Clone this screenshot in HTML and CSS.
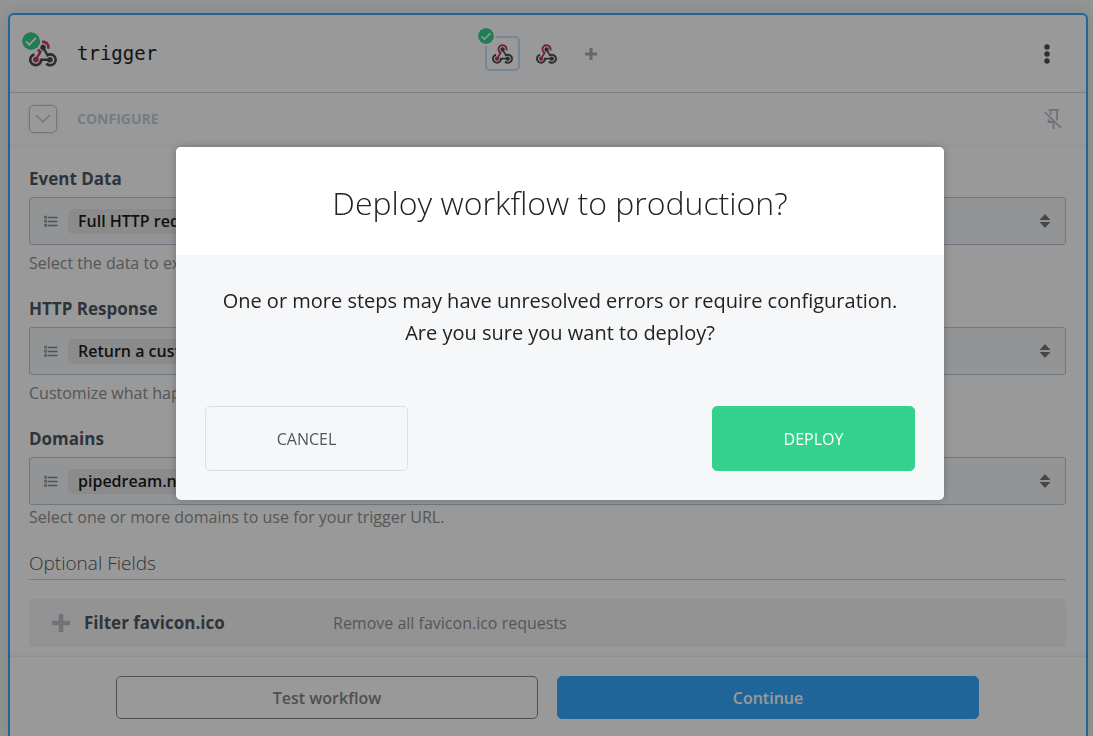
FILE: index.html
```html
<!DOCTYPE html>
<html lang="en">
<head>
<meta charset="utf-8">
<meta name="viewport" content="width=device-width, initial-scale=1">
<title>Deploy workflow</title>
<link rel="stylesheet" href="styles.css">
</head>
<body>
<svg class="sprite" aria-hidden="true">
  <symbol id="webhook" viewBox="0 0 256 239">
    <path fill="#C73A63" d="M119.54 100.503c-10.61 17.836-20.775 35.108-31.152 52.25-2.665 4.401-3.984 7.986-1.855 13.58 5.878 15.454-2.414 30.493-17.998 34.575-14.697 3.851-29.016-5.808-31.932-21.543-2.584-13.927 8.224-27.58 23.58-29.757 1.286-.184 2.6-.205 4.762-.367l23.358-39.168C73.612 95.465 64.868 78.39 66.803 57.23c1.368-14.957 7.25-27.883 18-38.477 20.59-20.288 52.002-23.573 76.246-8.001 23.284 14.958 33.948 44.094 24.858 69.031-6.854-1.858-13.756-3.732-21.343-5.79 2.854-13.865.743-26.315-8.608-36.981-6.178-7.042-14.106-10.733-23.12-12.093-18.072-2.73-35.815 8.88-41.08 26.618-5.976 20.132 3.069 36.575 27.784 48.967z"/>
    <path fill="#4B4B4B" d="M149.841 79.41c7.475 13.187 15.065 26.573 22.587 39.836 38.02-11.763 66.686 9.284 76.97 31.817 12.422 27.219 3.93 59.457-20.465 76.25-25.04 17.238-56.707 14.293-78.892-7.851 5.654-4.733 11.336-9.487 17.407-14.566 21.912 14.192 41.077 13.524 55.305-3.282 12.133-14.337 11.87-35.714-.615-49.75-14.408-16.197-33.707-16.691-57.035-1.143-9.677-17.168-19.522-34.199-28.893-51.491-3.16-5.828-6.648-9.21-13.77-10.443-11.893-2.062-19.571-12.275-20.032-23.717-.453-11.316 6.214-21.545 16.634-25.53 10.322-3.949 22.435-.762 29.378 8.014 5.674 7.17 7.477 15.24 4.491 24.083-.83 2.466-1.905 4.852-3.07 7.774z"/>
    <path fill="#4A4A4A" d="M167.707 187.21h-45.77c-4.387 18.044-13.863 32.612-30.19 41.876-12.693 7.2-26.373 9.641-40.933 7.29-26.808-4.323-48.728-28.456-50.658-55.63-2.184-30.784 18.975-58.147 47.178-64.293 1.947 7.071 3.915 14.21 5.862 21.264-25.876 13.202-34.832 29.836-27.59 50.636 6.375 18.304 24.484 28.337 44.147 24.457 20.08-3.962 30.204-20.65 28.968-47.432 19.036 0 38.088-.197 57.126.097 7.434.117 13.173-.654 18.773-7.208 9.22-10.784 26.191-9.811 36.121.374 10.148 10.409 9.662 27.157-1.077 37.127-10.361 9.62-26.73 9.106-36.424-1.26-1.992-2.136-3.562-4.673-5.533-7.298z"/>
  </symbol>
  <symbol id="check" viewBox="0 0 18 18">
    <circle cx="9" cy="9" r="9" fill="#35d28d"/>
    <path d="M4 9.3l3.3 3.3L14 5.8" fill="none" stroke="#fff" stroke-width="1.8"/>
  </symbol>
  <symbol id="plus" viewBox="0 0 16 16">
    <path d="M6 0h4v6h6v4h-6v6H6v-6H0V6h6z" fill="currentColor"/>
  </symbol>
  <symbol id="list" viewBox="0 0 14 13">
    <path d="M4 2.5h9.5M4 6.5h9.5M4 10.5h9.5" fill="none" stroke="currentColor" stroke-width="1.5"/>
    <path d="M.7 1.2h2v2h-2zM.7 5.2h2v2h-2zM.7 9.4h2v2h-2z" fill="none" stroke="currentColor" stroke-width="1"/>
  </symbol>
  <symbol id="sort" viewBox="0 0 12 14">
    <path d="M6 0l5.5 6H.5zM6 14L.5 8h11z" fill="currentColor"/>
  </symbol>
</svg>

<main class="card">
  <header class="card-header">
    <div class="title">
      <span class="title-icon">
        <svg class="logo-large"><use href="#webhook"/></svg>
        <svg class="badge badge-large"><use href="#check"/></svg>
      </span>
      <h1 class="name">trigger</h1>
    </div>
    <nav class="tabs" aria-label="Triggers">
      <button class="tab tab-active" aria-label="Trigger 1">
        <svg class="logo-small"><use href="#webhook"/></svg>
        <svg class="badge badge-small"><use href="#check"/></svg>
      </button>
      <button class="tab" aria-label="Trigger 2"><svg class="logo-small"><use href="#webhook"/></svg></button>
      <button class="tab tab-add" aria-label="Add trigger"><svg class="plus-small"><use href="#plus"/></svg></button>
    </nav>
    <button class="tab menu" aria-label="More options">
      <svg class="kebab" viewBox="0 0 6 20"><circle cx="3" cy="3" r="2.7"/><circle cx="3" cy="10" r="2.7"/><circle cx="3" cy="17" r="2.7"/></svg>
    </button>
  </header>

  <section class="section-bar">
    <button class="toggle" aria-label="Collapse">
      <svg class="chevron" viewBox="0 0 16 10"><path d="M1 1l7 7 7-7"/></svg>
    </button>
    <h2 class="section-name">CONFIGURE</h2>
    <button class="pin" aria-label="Pin">
      <svg class="pin-icon" viewBox="0 0 18 21"><path d="M4.500 1H15M6.500 1v5M13 1v10.500M4 13h6M5.500 10.500L4 13.500M9.500 13.500V20M.8 3.200l16.400 16"/></svg>
    </button>
  </section>

  <div class="fields">
    <div class="field">
      <label class="label" for="event-data">Event Data</label>
      <div class="control">
        <svg class="list-icon"><use href="#list"/></svg>
        <select class="value" id="event-data"><option>Full HTTP request</option></select>
        <svg class="sort-icon"><use href="#sort"/></svg>
      </div>
      <p class="help">Select the data to expose</p>
    </div>
    <div class="field">
      <label class="label" for="http-response">HTTP Response</label>
      <div class="control">
        <svg class="list-icon"><use href="#list"/></svg>
        <select class="value" id="http-response"><option>Return a custom response</option></select>
        <svg class="sort-icon"><use href="#sort"/></svg>
      </div>
      <p class="help">Customize what happens</p>
    </div>
    <div class="field field-tight">
      <label class="label" for="domains">Domains</label>
      <div class="control">
        <svg class="list-icon"><use href="#list"/></svg>
        <select class="value" id="domains"><option>pipedream.net</option></select>
        <svg class="sort-icon"><use href="#sort"/></svg>
      </div>
      <p class="help">Select one or more domains to use for your trigger URL.</p>
    </div>

    <h2 class="optional">Optional Fields</h2>
    <button class="option">
      <svg class="plus-large"><use href="#plus"/></svg>
      <span class="option-name">Filter favicon.ico</span>
      <span class="option-text">Remove all favicon.ico requests</span>
    </button>
  </div>

  <footer class="card-footer">
    <button class="action action-outline">Test workflow</button>
    <button class="action action-primary">Continue</button>
  </footer>
</main>

<div class="overlay">
  <div class="modal" role="dialog" aria-modal="true" aria-labelledby="modal-title">
    <div class="modal-header"><h2 class="modal-title" id="modal-title">Deploy workflow to production?</h2></div>
    <div class="modal-body">
      <p class="modal-text">One or more steps may have unresolved errors or require configuration.<br>Are you sure you want to deploy?</p>
      <div class="modal-actions">
        <button class="modal-button cancel">CANCEL</button>
        <button class="modal-button deploy">DEPLOY</button>
      </div>
    </div>
  </div>
</div>
</body>
</html>
```
FILE: styles.css
```css
* { box-sizing: border-box; }

body {
  margin: 0;
  height: 100vh;
  overflow: hidden;
  padding: 13px 5px 0 8px;
  background: #f6f8f8;
  font: 16px/24px "Open Sans", "Noto Sans", sans-serif;
  color: #4f5763;
}

h1, h2, p { margin: 0; }

button {
  font: inherit;
  color: inherit;
  padding: 0;
  border: 0;
  background: none;
}

svg { display: block; flex: none; }

.sprite { position: absolute; width: 0; height: 0; }

.card {
  background: #fff;
  border: 2px solid #34a9ff;
  border-bottom: 0;
  border-radius: 6px 6px 0 0;
  box-shadow: 0 0 20px rgba(0, 0, 0, .12);
}

.card-header {
  display: grid;
  grid-template-columns: 1fr auto 1fr;
  align-items: center;
  height: 78px;
  padding: 0 22px 0 19px;
  border-bottom: 1px solid #d3d6da;
}

.title { display: flex; align-items: center; gap: 20px; }
.title-icon { position: relative; }
.logo-large { width: 28px; height: 27px; }
.logo-small { width: 21px; height: 20px; }

.badge {
  position: absolute;
  border-radius: 50%;
  box-shadow: 0 0 0 2px #fff;
}
.badge-large { width: 18px; height: 18px; left: -7px; top: -8px; }
.badge-small { width: 16px; height: 16px; left: -9px; top: -10px; }

.name {
  padding-bottom: 2px;
  font: 19px/28px "DejaVu Sans Mono", monospace;
  color: #1c1f22;
}

.tabs { display: flex; gap: 9px; }

.tab {
  position: relative;
  display: grid;
  place-items: center;
  width: 35px;
  height: 35px;
  border: 2px solid transparent;
  border-radius: 5px;
}
.tab-active { border-color: #c4e2f7; }
.tab-add { color: #a3adbb; }
.plus-small { width: 12px; height: 12px; }
.menu { justify-self: end; }
.kebab { width: 6px; height: 20px; fill: #4a5058; }

.section-bar {
  display: flex;
  align-items: center;
  gap: 20px;
  height: 53px;
  padding: 0 22px 0 19px;
  border-bottom: 1px solid #f4f4f4;
}

.toggle {
  display: grid;
  place-items: center;
  width: 28px;
  height: 28px;
  border: 1px solid #b9c6d5;
  border-radius: 5px;
  box-shadow: 0 0 3px rgba(0, 0, 0, .12);
}
.chevron { width: 16px; height: 10px; fill: none; stroke: #b9c6d5; stroke-width: 1.5; }

.section-name { font-size: 14px; font-weight: 700; line-height: 24px; color: #c3cfdc; }
.pin { margin-left: auto; }
.pin-icon { width: 22px; height: 21px; fill: none; stroke: #b9c2cd; stroke-width: 1.8; }

.fields { padding: 21px 20px 9px 19px; }
.field { margin-bottom: 22px; }
.label { display: block; margin-bottom: 6px; font-weight: 700; font-size: 17px; }

.control {
  display: flex;
  align-items: center;
  height: 48px;
  padding: 0 14px;
  border: 1px solid #b9c6d5;
  border-radius: 3px;
  background: #f4f7fb;
}
.list-icon { width: 14px; height: 13px; margin-right: 10px; color: #888; }
.value {
  appearance: none;
  height: 25px;
  padding: 0 10px;
  border: 0;
  border-radius: 5px;
  background: #e8e8e8;
  font: 600 16px/24px "Open Sans", "Noto Sans", sans-serif;
  color: #1c1c1c;
}
.sort-icon { width: 12px; height: 14px; margin-left: auto; color: #777; }

.help { margin-top: 6px; color: #8f8f8f; }
.field-tight .help { margin-top: 0; }

.optional {
  padding-bottom: 4px;
  border-bottom: 1px solid #d3d3d3;
  font-size: 19px;
  font-weight: 300;
  line-height: 24px;
}

.option {
  display: grid;
  grid-template-columns: 32px 249px 1fr;
  align-items: center;
  width: 100%;
  height: 48px;
  margin-top: 19px;
  padding: 0 23px;
  border-radius: 4px;
  background: #f6f6f6;
  text-align: left;
}
.plus-large { width: 18px; height: 18px; color: #b9c2cd; }
.option-name { font-weight: 700; font-size: 17px; }
.option-text { color: #8f8f8f; }

.card-footer {
  display: flex;
  justify-content: center;
  gap: 19px;
  padding: 19px 107px 19px 106px;
  border-top: 1px solid #eee;
  box-shadow: 0 -1px 3px rgba(0, 0, 0, .04);
}

.action {
  flex: 1;
  height: 43px;
  border: 1px solid #858585;
  border-radius: 5px;
  font-weight: 600;
}
.action-outline { color: #858585; }
.action-primary { border-color: #34a9ff; background: #34a9ff; color: #fff; }

.overlay {
  position: fixed;
  inset: 0;
  padding: 147px 0 0 27px;
  background: rgba(0, 0, 0, .4);
}

.modal {
  max-width: 768px;
  margin: 0 auto;
  border-radius: 5px;
  overflow: hidden;
  background: #f6f7f9;
  box-shadow: 0 0 8px rgba(0, 0, 0, .25);
  text-align: center;
}

.modal-header { padding: 34px 29px 30px; background: #fff; }
.modal-title { font-size: 32px; font-weight: 300; line-height: 44px; color: #222; }
.modal-body { padding: 30px 29px 29px; }
.modal-text { font-size: 20px; line-height: 32px; color: #222; }

.modal-actions { display: flex; justify-content: space-between; margin-top: 57px; }
.modal-button {
  width: 203px;
  height: 65px;
  border: 1px solid #dddfe2;
  border-radius: 5px;
}
.cancel { color: #4f5763; }
.deploy { border-color: #35d28d; background: #35d28d; color: #fff; }
```
